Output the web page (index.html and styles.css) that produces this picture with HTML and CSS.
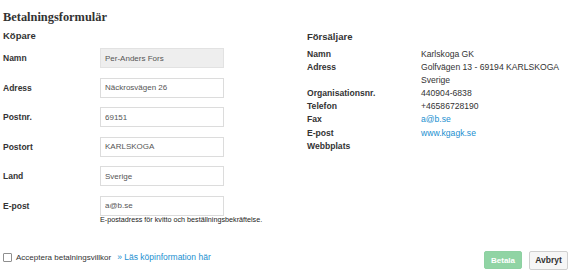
FILE: index.html
```html
<!DOCTYPE html>
<html lang="sv">
<head>
    <meta charset="UTF-8">
    <meta name="viewport" content="width=device-width, initial-scale=1.0">
    <title>Betalningsformulär</title>
    <link rel="stylesheet" href="styles.css">
</head>
<body>
    <div class="page">
        <h1 class="title">Betalningsformulär</h1>

        <div class="columns">
            <!-- Buyer form -->
            <div class="buyer">
                <h2 class="section-head">Köpare</h2>
                <div class="field">
                    <label class="field-label">Namn</label>
                    <input class="field-input readonly" type="text" value="Per-Anders Fors" readonly>
                </div>
                <div class="field">
                    <label class="field-label">Adress</label>
                    <input class="field-input" type="text" value="Näckrosvägen 26">
                </div>
                <div class="field">
                    <label class="field-label">Postnr.</label>
                    <input class="field-input" type="text" value="69151">
                </div>
                <div class="field">
                    <label class="field-label">Postort</label>
                    <input class="field-input" type="text" value="KARLSKOGA">
                </div>
                <div class="field">
                    <label class="field-label">Land</label>
                    <input class="field-input" type="text" value="Sverige">
                </div>
                <div class="field last">
                    <label class="field-label">E-post</label>
                    <input class="field-input" type="text" value="a@b.se">
                </div>
                <p class="help">E-postadress för kvitto och beställningsbekräftelse.</p>
            </div>

            <!-- Seller info -->
            <div class="seller">
                <h2 class="section-head">Försäljare</h2>
                <div class="info-grid">
                    <span class="info-label">Namn</span><span>Karlskoga GK</span>
                    <span class="info-label">Adress</span><span>Golfvägen 13 - 69194 KARLSKOGA</span>
                    <span class="info-label"></span><span>Sverige</span>
                    <span class="info-label">Organisationsnr.</span><span>440904-6838</span>
                    <span class="info-label">Telefon</span><span>+46586728190</span>
                    <span class="info-label">Fax</span><a class="link" href="#">a@b.se</a>
                    <span class="info-label">E-post</span><a class="link" href="#">www.kgagk.se</a>
                    <span class="info-label">Webbplats</span><span></span>
                </div>
            </div>
        </div>

        <div class="footer">
            <label class="accept">
                <input class="check" type="checkbox">
                <span>Acceptera betalningsvillkor</span>
                <a class="link more" href="#">» Läs köpinformation här</a>
            </label>
            <div class="actions">
                <button class="btn btn-pay" disabled>Betala</button>
                <button class="btn btn-cancel">Avbryt</button>
            </div>
        </div>
    </div>
</body>
</html>
```

FILE: styles.css
```css
body {
    margin: 0;
    background: #fff;
    color: #333;
    font-family: "Liberation Sans", Arial, sans-serif;
}

.page {
    padding: 9px 2px 0 3px;
}

.title {
    margin: 0;
    font-family: "Liberation Serif", "Times New Roman", serif;
    font-size: 12.4px;
    line-height: 16px;
    font-weight: bold;
    color: #333;
}

.columns {
    display: flex;
}

.buyer {
    width: 304px;
}

.seller {
    flex: 1;
}

.section-head {
    margin: 3.5px 0 6.5px;
    font-size: 9.5px;
    line-height: 13px;
    font-weight: bold;
}

.seller .section-head {
    margin-top: 4.5px;
    margin-bottom: 5px;
}

/* form rows */
.field {
    display: flex;
    align-items: center;
    margin-bottom: 9.6px;
}

.field.last {
    margin-bottom: 0;
}

.field-label {
    width: 97px;
    font-size: 8.5px;
    font-weight: bold;
}

.field-input {
    box-sizing: border-box;
    width: 124px;
    height: 20px;
    margin: 0;
    padding: 0 4px;
    border: 1px solid #dcdcdc;
    border-radius: 0;
    background: #fff;
    color: #555;
    font-family: "Liberation Sans", Arial, sans-serif;
    font-size: 8px;
    outline: none;
}

.field-input.readonly {
    background: #eee;
    border-color: #e2e2e2;
}

.help {
    margin: 0 0 0 97px;
    font-size: 7.2px;
    line-height: 8px;
    color: #222;
}

/* seller info */
.info-grid {
    display: grid;
    grid-template-columns: 114px auto;
    grid-auto-rows: 13.2px;
    font-size: 8.6px;
    line-height: 13.2px;
}

.info-label {
    font-weight: bold;
}

.link {
    color: #1a8fd0;
    text-decoration: none;
}

/* footer */
.footer {
    display: flex;
    justify-content: space-between;
    align-items: flex-start;
    margin-top: 27px;
}

.accept {
    display: flex;
    align-items: center;
    height: 12px;
    margin-top: 0.5px;
    font-size: 8px;
    color: #333;
}

.check {
    appearance: none;
    box-sizing: border-box;
    width: 9px;
    height: 9px;
    margin: 0 4px 0 0;
    border: 1px solid #8f8f8f;
    border-radius: 1px;
    background: #fff;
}

.more {
    margin-left: 6px;
    font-size: 8.5px;
}

.actions {
    display: flex;
    align-items: center;
    gap: 7px;
}

.btn {
    box-sizing: border-box;
    height: 19px;
    padding: 0;
    border-radius: 2px;
    font-family: "Liberation Sans", Arial, sans-serif;
    font-size: 8px;
    font-weight: bold;
}

.btn-pay {
    width: 38px;
    height: 18px;
    border: 1px solid #8ed1a2;
    background: #90d4a4;
    color: #fff;
}

.btn-cancel {
    width: 39px;
    border: 1px solid #cfcfcf;
    background: #f6f6f6;
    color: #333;
    font-size: 8.5px;
}
```
